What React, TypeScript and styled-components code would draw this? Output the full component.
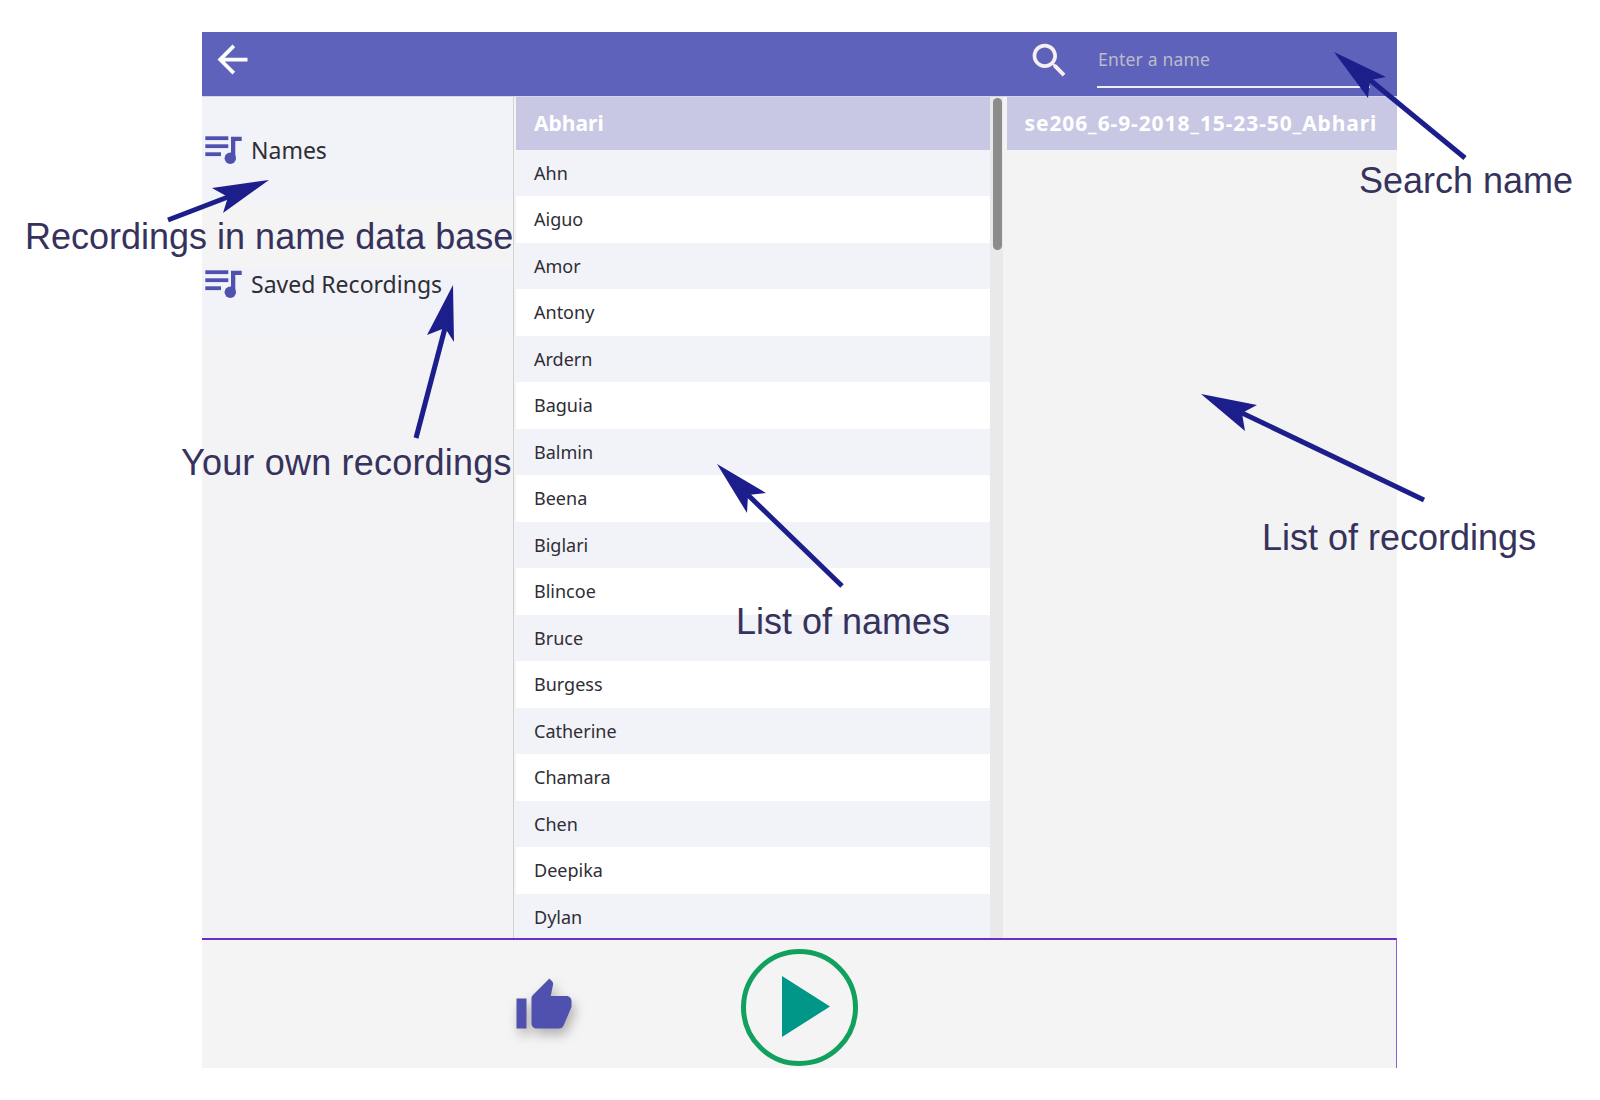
import styled, { createGlobalStyle } from 'styled-components';

const names = [
  'Ahn',
  'Aiguo',
  'Amor',
  'Antony',
  'Ardern',
  'Baguia',
  'Balmin',
  'Beena',
  'Biglari',
  'Blincoe',
  'Bruce',
  'Burgess',
  'Catherine',
  'Chamara',
  'Chen',
  'Deepika',
  'Dylan',
];

const arrows = [
  { tip: '269,180 212,188 228,197 223,213', tail: [228, 197, 168, 220] },
  { tip: '453,285 427,335 445,328 454,342', tail: [445, 328, 416, 438] },
  { tip: '1334,52 1386,77 1370,80 1368,98', tail: [1370, 80, 1465, 158] },
  { tip: '717,464 766,493 748,495 747,513', tail: [748, 495, 842, 586] },
  { tip: '1201,394 1257,405 1242,413 1245,431', tail: [1242, 413, 1424, 500] },
];

const labels = [
  { text: 'Recordings in name data base', x: 25, y: 216, spacing: 0 },
  { text: 'Your own recordings', x: 181, y: 442, spacing: 0.2 },
  { text: 'List of names', x: 736, y: 601, spacing: 0 },
  { text: 'List of recordings', x: 1262, y: 517, spacing: 0 },
  { text: 'Search name', x: 1359, y: 160, spacing: 0 },
];

const PlaylistIcon = () => (
  <svg width="38" height="31" viewBox="0 0 38 31" fill="#5050ae">
    <rect x="0.3" y="2.3" width="23" height="3.8" />
    <rect x="0.3" y="10.3" width="23" height="3.8" />
    <rect x="0.3" y="18.3" width="15.7" height="3.8" />
    <path d="M26 2.7h10.7V7h-6.4v17.3H26z" />
    <circle cx="25.3" cy="24.3" r="5.7" />
  </svg>
);

const App = () => {
  return (
    <Page>
      <GlobalStyle />
      <Frame>
        <Header>
          <BackIcon viewBox="0 0 24 24">
            <path d="M20 11H7.83l5.59-5.59L12 4l-8 8 8 8 1.41-1.41L7.83 13H20v-2z" />
          </BackIcon>
          <SearchIcon viewBox="0 0 24 24">
            <path d="M15.5 14h-.79l-.28-.27C15.41 12.59 16 11.11 16 9.5 16 5.91 13.09 3 9.5 3S3 5.91 3 9.5 5.91 16 9.5 16c1.61 0 3.09-.59 4.23-1.57l.27.28v.79l5 4.99L20.49 19l-4.99-5zm-6 0C7.01 14 5 11.99 5 9.5S7.01 5 9.5 5 14 7.01 14 9.5 11.99 14 9.5 14z" />
          </SearchIcon>
          <SearchField>Enter a name</SearchField>
        </Header>
        <Main>
          <Sidebar>
            <SideItem $height={105} $top={37}>
              <PlaylistIcon />
              <SideText>Names</SideText>
            </SideItem>
            <SideBand />
            <SideItem $height={68} $top={1}>
              <PlaylistIcon />
              <SideText>Saved Recordings</SideText>
            </SideItem>
          </Sidebar>
          <NameList>
            <SelectedRow>Abhari</SelectedRow>
            {names.map((name, i) => (
              <NameRow key={name} $odd={i % 2 === 1}>
                {name}
              </NameRow>
            ))}
          </NameList>
          <ScrollTrack>
            <ScrollThumb />
          </ScrollTrack>
          <RecordingList>
            <SelectedRow $spaced>se206_6-9-2018_15-23-50_Abhari</SelectedRow>
          </RecordingList>
        </Main>
        <Footer>
          <ThumbIcon viewBox="0 0 24 24">
            <path d="M1 21h4V9H1v12zm22-11c0-1.1-.9-2-2-2h-6.31l.95-4.57.03-.32c0-.41-.17-.79-.44-1.06L14.17 1 7.59 7.59C7.22 7.95 7 8.45 7 9v10c0 1.1.9 2 2 2h9c.83 0 1.54-.5 1.84-1.22l3.02-7.05c.09-.23.14-.47.14-.73v-2z" />
          </ThumbIcon>
          <PlayButton>
            <PlayTriangle viewBox="0 0 48 61">
              <path d="M0 0L48 30.5 0 61z" />
            </PlayTriangle>
          </PlayButton>
        </Footer>
      </Frame>
      <ArrowLayer viewBox="0 0 1600 1100">
        {arrows.map((arrow) => (
          <g key={arrow.tip}>
            <line
              x1={arrow.tail[0]}
              y1={arrow.tail[1]}
              x2={arrow.tail[2]}
              y2={arrow.tail[3]}
            />
            <polygon points={arrow.tip} />
          </g>
        ))}
      </ArrowLayer>
      {labels.map((label) => (
        <Label
          key={label.text}
          $x={label.x}
          $y={label.y}
          $spacing={label.spacing}
        >
          {label.text}
        </Label>
      ))}
    </Page>
  );
};

export default App;

const GlobalStyle = createGlobalStyle`
  html, body {
    margin: 0;
    background: #fff;
  }
`;

const Page = styled.div`
  position: relative;
  width: 1600px;
  height: 1100px;
  padding: 32px 0 0 202px;
  box-sizing: border-box;
  overflow: hidden;
  font-family: 'Noto Sans', 'Open Sans', sans-serif;
`;

const Frame = styled.div`
  width: 1195px;
  height: 1036px;
  display: flex;
  flex-direction: column;
  background: #f3f3f4;
`;

const Header = styled.header`
  height: 65px;
  flex: none;
  box-sizing: border-box;
  display: flex;
  align-items: center;
  padding: 0 0 8px 8px;
  background: #5f62ba;
  border-bottom: 1px solid #d6d6e6;
`;

const BackIcon = styled.svg`
  width: 45px;
  height: 45px;
  margin-top: -2px;
  fill: #fff;
`;

const SearchIcon = styled.svg`
  width: 45px;
  height: 45px;
  margin-left: 772px;
  fill: #f6eff2;
`;

const SearchField = styled.div`
  width: 273px;
  height: 56px;
  margin-left: 25px;
  padding-left: 1px;
  box-sizing: border-box;
  display: flex;
  align-items: center;
  font-size: 17.5px;
  letter-spacing: 0.2px;
  color: #bcbcc8;
  border-bottom: 2px solid #f1f0f8;
`;

const Main = styled.main`
  flex: 1;
  min-height: 0;
  display: flex;
  overflow: hidden;
`;

const Sidebar = styled.nav`
  width: 311px;
  flex: none;
  background: #f3f3f5;
  border-right: 1px solid #d2d2d2;
`;

const SideItem = styled.div<{ $height: number; $top: number }>`
  height: ${(props) => props.$height}px;
  padding: ${(props) => props.$top}px 0 0 3px;
  box-sizing: border-box;
  display: flex;
  align-items: flex-start;
  gap: 8px;
  background: #f2f2f9;
`;

const SideBand = styled.div`
  height: 65px;
  background: #f4f4f4;
`;

const SideText = styled.span`
  font-size: 23px;
  line-height: 32px;
  color: #2e2e34;
`;

const NameList = styled.section`
  width: 474px;
  flex: none;
  margin-left: 2px;
  background: #fff;
`;

const SelectedRow = styled.div<{ $spaced?: boolean }>`
  height: 52.5px;
  padding: 0 18px;
  display: flex;
  align-items: center;
  white-space: nowrap;
  font-size: 21px;
  font-weight: 700;
  letter-spacing: ${(props) => (props.$spaced ? '0.9px' : '0')};
  color: #fff;
  background: #c8c8e4;
`;

const NameRow = styled.div<{ $odd: boolean }>`
  height: 46.5px;
  padding: 0 18px;
  display: flex;
  align-items: center;
  font-size: 18px;
  color: #2e2e34;
  background: ${(props) => (props.$odd ? '#fff' : '#f2f2f9')};
`;

const ScrollTrack = styled.div`
  width: 13px;
  flex: none;
  padding: 1px 1px 0 3px;
  box-sizing: border-box;
  background: #e9e9e9;
`;

const ScrollThumb = styled.div`
  width: 9px;
  height: 152px;
  border-radius: 5px;
  background: #8c8c8c;
`;

const RecordingList = styled.section`
  flex: 1;
  margin-left: 3.5px;
`;

const Footer = styled.footer`
  height: 130px;
  flex: none;
  display: flex;
  align-items: flex-start;
  box-sizing: border-box;
  padding: 36px 0 0 312px;
  background: #f4f4f4;
  border-top: 2px solid #6a2fc8;
  border-right: 1px solid #8a5fd8;
`;

const ThumbIcon = styled.svg`
  width: 60px;
  height: 60px;
  fill: #5050ae;
  filter: drop-shadow(3px 6px 6px rgba(0, 0, 0, 0.28));
`;

const PlayButton = styled.div`
  width: 117px;
  height: 117px;
  margin: -27px 0 0 167px;
  flex: none;
  box-sizing: border-box;
  display: flex;
  align-items: center;
  padding-left: 36px;
  border: 5px solid #12a05f;
  border-radius: 50%;
`;

const PlayTriangle = styled.svg`
  width: 48px;
  height: 61px;
  margin-top: -3px;
  fill: #009688;
`;

const ArrowLayer = styled.svg`
  position: absolute;
  left: 0;
  top: 0;
  width: 1600px;
  height: 1100px;
  pointer-events: none;

  line {
    stroke: #1c1f8b;
    stroke-width: 5;
  }

  polygon {
    fill: #1c1f8b;
  }
`;

const Label = styled.div<{ $x: number; $y: number; $spacing: number }>`
  position: absolute;
  left: ${(props) => props.$x}px;
  top: ${(props) => props.$y}px;
  font-family: 'Liberation Sans', Arial, sans-serif;
  font-size: 36px;
  line-height: 41px;
  letter-spacing: ${(props) => props.$spacing}px;
  white-space: nowrap;
  color: #36325c;
`;
